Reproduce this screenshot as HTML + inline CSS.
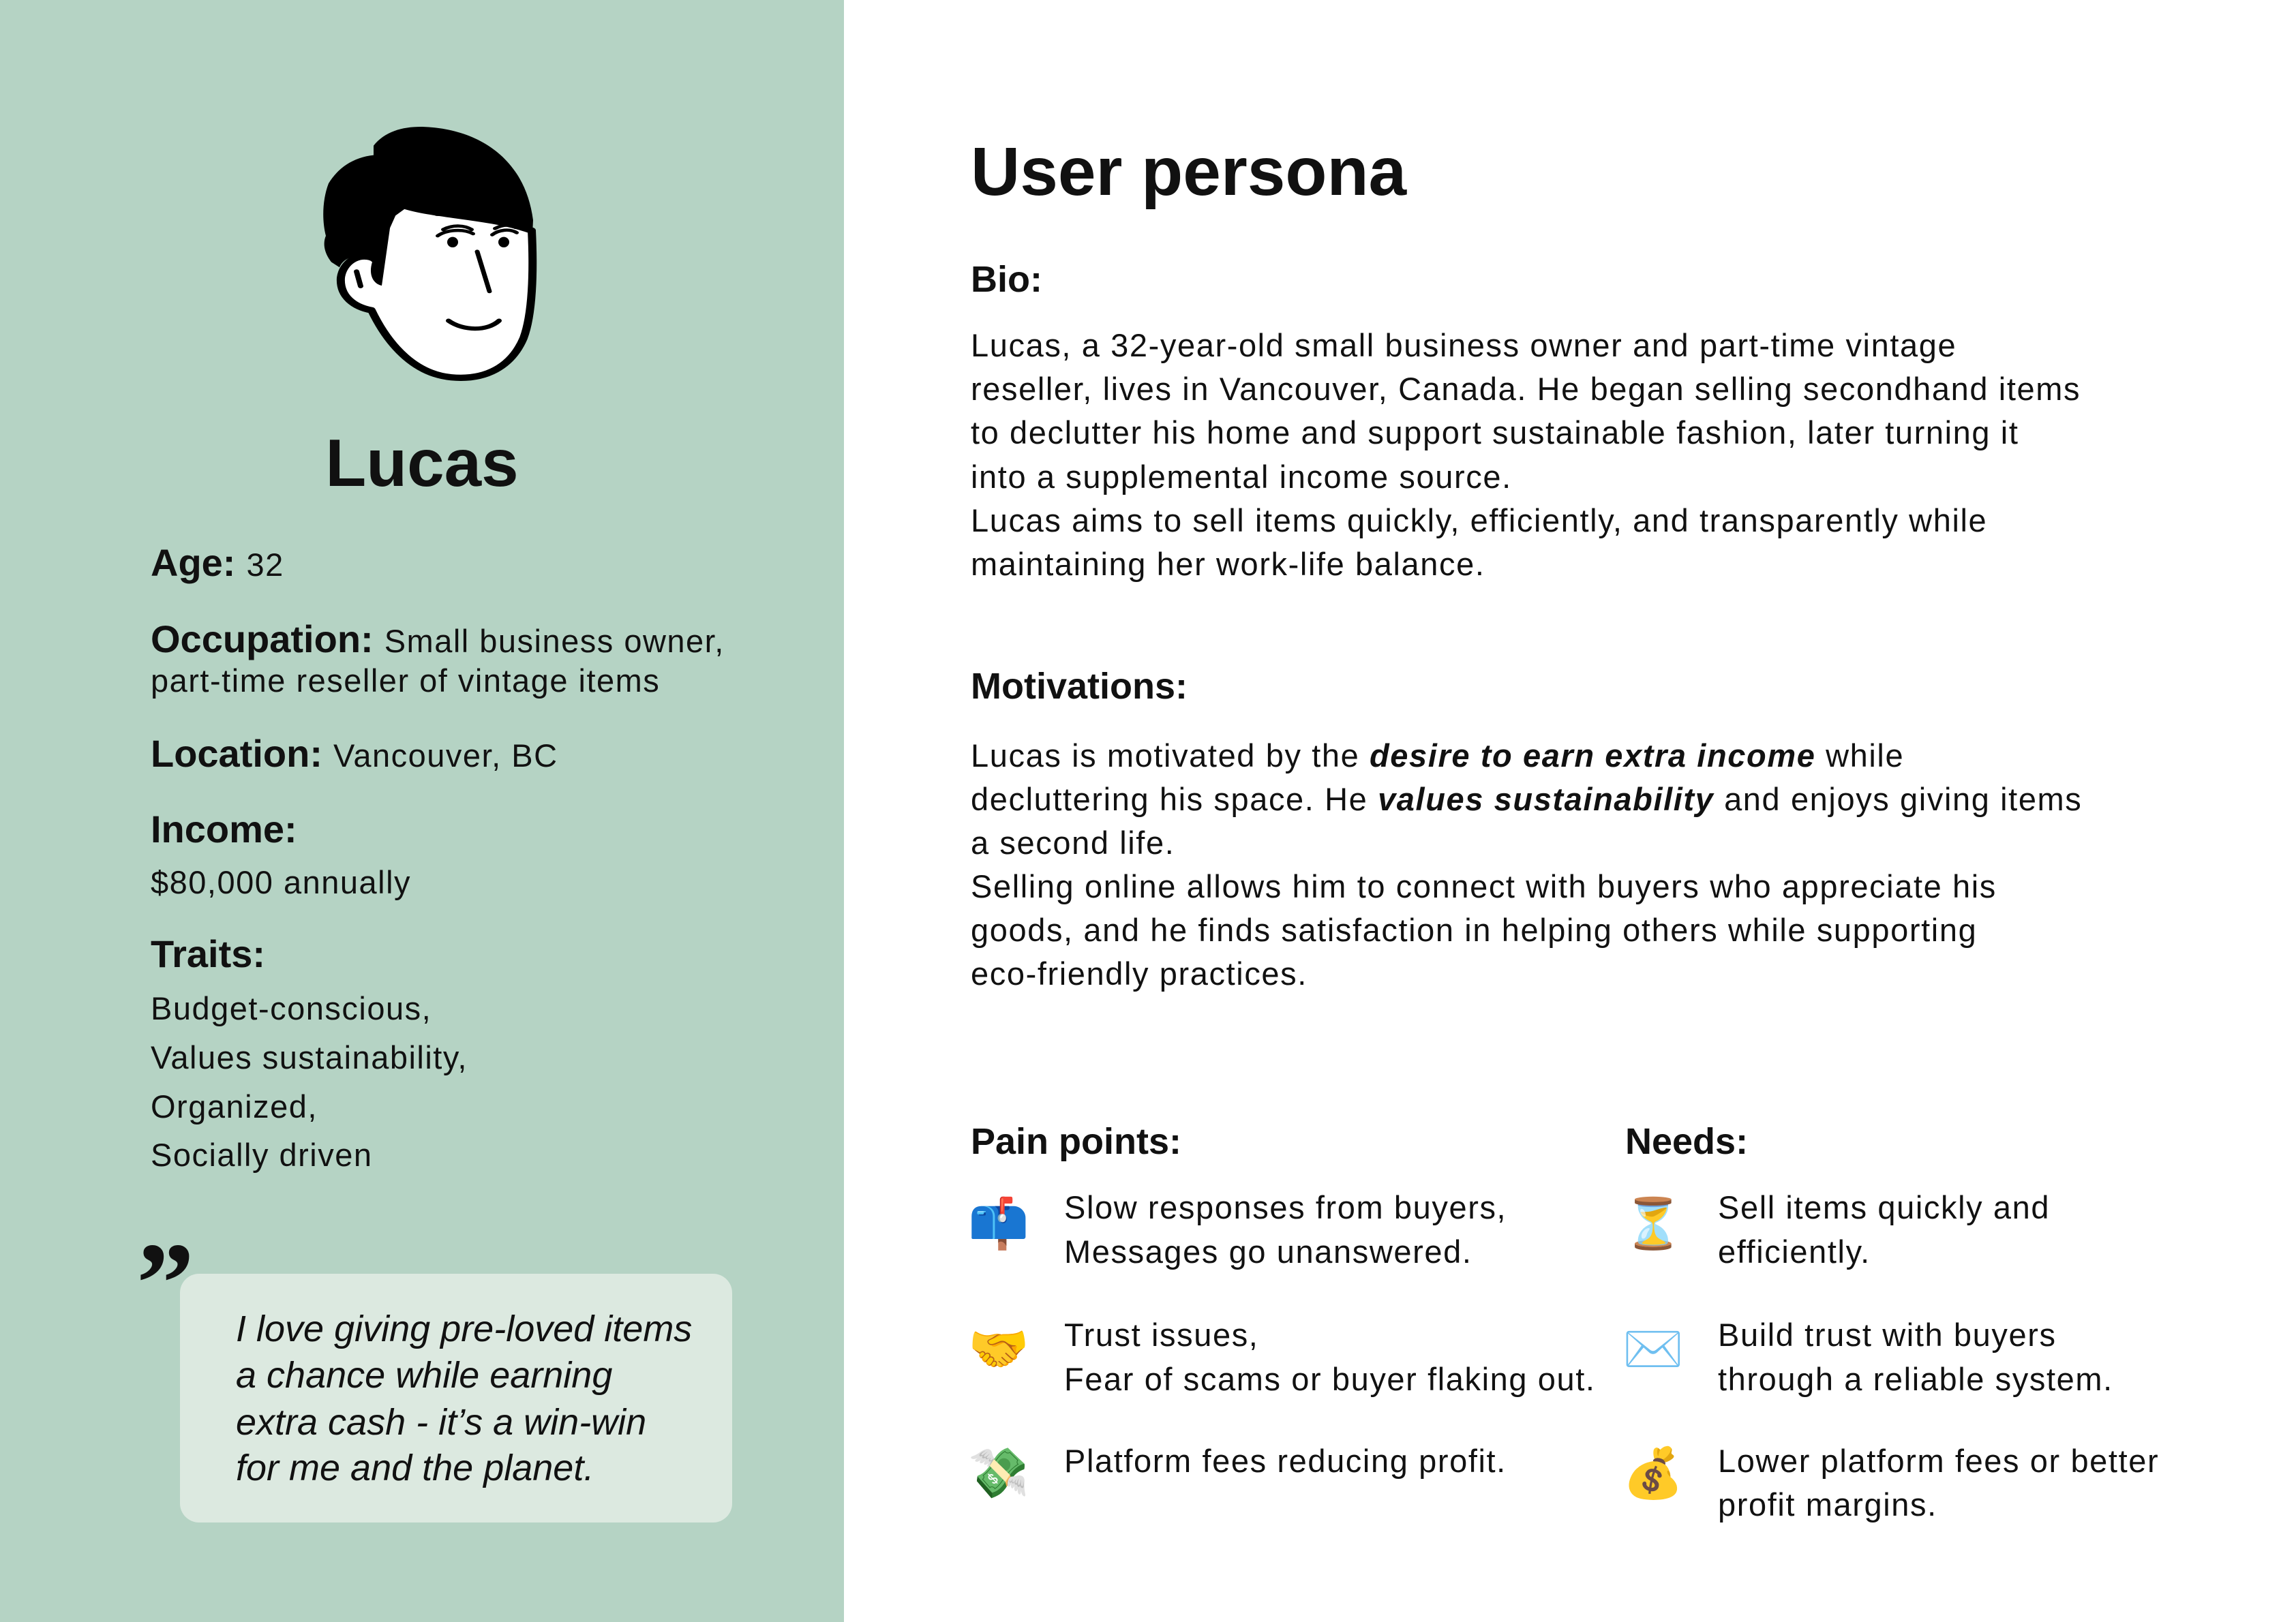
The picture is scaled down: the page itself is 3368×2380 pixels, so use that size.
<!DOCTYPE html>
<html><head><meta charset="utf-8"><style>
*{margin:0;padding:0;box-sizing:border-box}
body{width:3368px;height:2380px;background:#fff;font-family:"Liberation Sans",sans-serif;color:#111;position:relative;overflow:hidden}
.t{position:absolute;white-space:nowrap;line-height:1}
.left{position:absolute;left:0;top:0;width:1238px;height:2380px;background:#b5d3c4}
b{font-weight:bold}
.lbl{font-size:56px;font-weight:bold}
.v{font-size:47px;letter-spacing:1.5px}
span.lbl + span.v{margin-left:16px}
.p{font-size:47px;letter-spacing:1.6px}
.h2{font-size:54px;font-weight:bold}
.q{font-size:54px;font-style:italic}
.emo{position:absolute;font-size:72px;line-height:1;font-family:"Noto Color Emoji","DejaVu Sans",sans-serif}
</style></head><body>
<div class="left"></div>
<svg style="position:absolute;left:0;top:0" width="1238" height="800" viewBox="0 0 1238 800">
<g transform="scale(1,0.769)">
 <path d="M575,408 L592,392 C640,412 720,412 780,440 C783,520 781,600 768,645 C750,700 712,726 662,720 C612,714 572,665 545,592 C520,586 498,566 500,530 C503,500 526,482 546,492 Z" fill="#fff" stroke="#000" stroke-width="12" stroke-linejoin="round"/>
 <path d="M548,278 C565,250 592,241 622,242 C700,246 770,300 782,420 L781,448 C760,425 705,412 640,412 L592,392 L575,408 L560,545 C548,542 540,525 546,500 C530,482 505,488 498,510 L486,500 C474,480 474,462 478,450 C472,420 473,380 482,350 C497,318 520,300 548,296 Z" fill="#000"/>
 <ellipse cx="664" cy="462" rx="8" ry="10" fill="#000"/><ellipse cx="739" cy="462" rx="8" ry="10" fill="#000"/>
 <path d="M642,450 C655,438 680,436 694,446 M650,438 C665,428 682,430 692,438 M722,448 C732,438 748,436 758,444 M726,436 C738,428 748,428 756,434" stroke="#000" stroke-width="6" fill="none" stroke-linecap="round"/>
 <path d="M700,480 L718,556" stroke="#000" stroke-width="7" stroke-linecap="round"/>
 <path d="M658,612 C680,632 715,632 732,612" stroke="#000" stroke-width="8" fill="none" stroke-linecap="round"/>
 <path d="M523,518 L529,546" stroke="#000" stroke-width="8" stroke-linecap="round"/>
</g>
</svg>
<div class="t" style="left:0;width:1238px;text-align:center;top:630px;font-size:98px;font-weight:bold">Lucas</div>

<div class="t" style="left:221px;top:798px"><span class="lbl">Age:</span><span class="v">32</span></div>
<div class="t" style="left:221px;top:910px"><span class="lbl">Occupation:</span><span class="v">Small business owner,</span></div>
<div class="t v" style="left:221px;top:975px">part-time reseller of vintage items</div>
<div class="t" style="left:221px;top:1078px"><span class="lbl">Location:</span><span class="v">Vancouver, BC</span></div>
<div class="t lbl" style="left:221px;top:1189px">Income:</div>
<div class="t v" style="left:221px;top:1271px">$80,000 annually</div>
<div class="t lbl" style="left:221px;top:1372px">Traits:</div>
<div class="t v" style="left:221px;top:1456px">Budget-conscious,</div>
<div class="t v" style="left:221px;top:1528px">Values sustainability,</div>
<div class="t v" style="left:221px;top:1600px">Organized,</div>
<div class="t v" style="left:221px;top:1671px">Socially driven</div>

<div class="t" style="left:200px;top:1798px;font-size:170px;font-weight:bold;font-family:'Liberation Serif',serif">”</div>
<div style="position:absolute;left:264px;top:1869px;width:810px;height:365px;background:#dce9e0;border-radius:28px"></div>
<div class="t q" style="left:346px;top:1923px">I love giving pre-loved items</div>
<div class="t q" style="left:346px;top:1991px">a chance while earning</div>
<div class="t q" style="left:346px;top:2060px">extra cash - it’s a win-win</div>
<div class="t q" style="left:346px;top:2127px">for me and the planet.</div>

<div class="t" style="left:1424px;top:202px;font-size:100px;font-weight:bold">User persona</div>
<div class="t h2" style="left:1424px;top:383px">Bio:</div>
<div class="t p" style="left:1424px;top:483px">Lucas, a 32-year-old small business owner and part-time vintage</div>
<div class="t p" style="left:1424px;top:547px">reseller, lives in Vancouver, Canada. He began selling secondhand items</div>
<div class="t p" style="left:1424px;top:611px">to declutter his home and support sustainable fashion, later turning it</div>
<div class="t p" style="left:1424px;top:676px">into a supplemental income source.</div>
<div class="t p" style="left:1424px;top:740px">Lucas aims to sell items quickly, efficiently, and transparently while</div>
<div class="t p" style="left:1424px;top:804px">maintaining her work-life balance.</div>

<div class="t h2" style="left:1424px;top:980px">Motivations:</div>
<div class="t p" style="left:1424px;top:1085px">Lucas is motivated by the <b><i>desire to earn extra income</i></b> while</div>
<div class="t p" style="left:1424px;top:1149px">decluttering his space. He <b><i>values sustainability</i></b> and enjoys giving items</div>
<div class="t p" style="left:1424px;top:1213px">a second life.</div>
<div class="t p" style="left:1424px;top:1277px">Selling online allows him to connect with buyers who appreciate his</div>
<div class="t p" style="left:1424px;top:1341px">goods, and he finds satisfaction in helping others while supporting</div>
<div class="t p" style="left:1424px;top:1405px">eco-friendly practices.</div>

<div class="t h2" style="left:1424px;top:1648px">Pain points:</div>
<div class="t h2" style="left:2384px;top:1648px">Needs:</div>

<div class="emo" style="left:1420px;top:1760px">📫</div>
<div class="t p" style="left:1561px;top:1748px">Slow responses from buyers,</div>
<div class="t p" style="left:1561px;top:1813px">Messages go unanswered.</div>
<div class="emo" style="left:1420px;top:1944px">🤝</div>
<div class="t p" style="left:1561px;top:1935px">Trust issues,</div>
<div class="t p" style="left:1561px;top:2000px">Fear of scams or buyer flaking out.</div>
<div class="emo" style="left:1420px;top:2126px">💸</div>
<div class="t p" style="left:1561px;top:2120px">Platform fees reducing profit.</div>

<div class="emo" style="left:2380px;top:1760px">⏳</div>
<div class="t p" style="left:2520px;top:1748px">Sell items quickly and</div>
<div class="t p" style="left:2520px;top:1813px">efficiently.</div>
<div class="emo" style="left:2380px;top:1944px">✉️</div>
<div class="t p" style="left:2520px;top:1935px">Build trust with buyers</div>
<div class="t p" style="left:2520px;top:2000px">through a reliable system.</div>
<div class="emo" style="left:2380px;top:2126px">💰</div>
<div class="t p" style="left:2520px;top:2120px">Lower platform fees or better</div>
<div class="t p" style="left:2520px;top:2184px">profit margins.</div>
</body></html>
